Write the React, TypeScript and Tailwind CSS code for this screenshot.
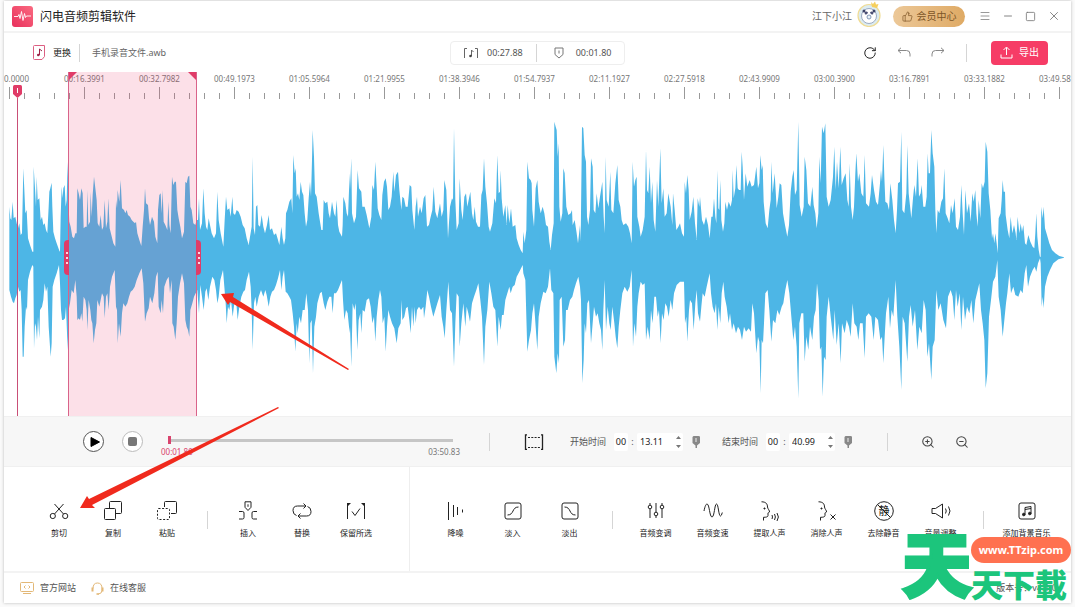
import React, { useState } from "react";
import { Menu, Minus, Square, X, RotateCw, ThumbsUp, ZoomIn, ZoomOut } from "lucide-react";

// Envelope outlines, stored in three blocks. Each block starts at its own offset, silence is y = 443.
const TOP = [
  "28,443 28,290 31,325 34,330 38,275 41,325 46,320 50,340 54,355 58,340 62,375 66,370 70,175 73,240 76,310 80,300 84,385 90,405 97,425 100,425 101,170 105,235 108,290 110,200 113,270 118,265 122,330 126,320 130,345 134,340 138,360 142,370 146,290 148,245 151,235 155,218 157,290 160,365 165,385 170,400 178,422 180,425 182,320 185,230 188,265 190,235 194,225 197,290 200,270 203,155 206,290 208,335 212,350 217,380 222,385 226,370 230,370 232,235 236,250 240,270 244,235 248,250 251,355 256,350 260,350 262,240 265,345 270,335 272,245 275,320 278,255 282,200 286,235 290,270 293,340 298,350 302,315 306,360 310,350 314,270 318,355 322,335 325,265 329,355 334,375 340,400 346,410 348,270 351,295 353,240 358,275 362,210 366,295 372,300 376,310 380,300 384,315 390,320 395,330 400,335 405,340 408,335 412,370 418,390 424,408 428,350 432,300 435,235 438,280 444,285 447,325 450,345 456,320 462,335 466,380 472,400 474,300 478,255 482,250 485,310 488,240 491,335 496,345 502,360 505,275 508,345 512,370 516,200 520,225 524,215 528,215 532,300 536,325 541,350 546,385 552,365 556,215 560,220 564,200 568,197 571,290 575,300 580,340 586,345 590,330 594,330 597,265 600,360 606,340 610,235 614,310 618,350 622,360 626,325 630,345 635,370 642,385 648,370 652,245 656,330 662,370 670,410 674,330 678,260 682,300 688,295 692,320 697,260 700,310 705,315 710,300 716,305 722,320 728,345 734,355 740,385 746,405 750,380 755,350 758,140 761,355 765,375 768,290 772,285 775,345 780,350 785,315 790,350 795,370 801,345 806,315 810,360 816,355 822,375 828,370 834,390 838,405 844,350 848,385 852,405 856,385 858,310 862,300 868,275 874,265 877,310 880,135 884,190 887,175 890,260 894,250 898,270 902,215 906,245 910,255 914,310 918,350 922,330 926,265 930,215 933,260 936,150 938,60 942,140 945,250 950,260 956,310 964,360 968,360 971,270 976,280 982,275 986,310 990,325 996,275 1002,310 1006,320 1010,270 1014,345 1018,365 1026,380 1028,345 1030,260 1036,280 1040,310 1044,320 1049,190",
  "0,240 4,145 6,310 12,340 18,320 23,180 27,235 34,245 37,290 44,290 50,315 58,355 64,320 67,225 72,240 76,155 80,230 83,295 88,315 94,330 97,255 102,215 107,205 111,230 115,300 120,290 125,260 130,185 133,245 138,195 144,185 148,240 154,300 157,260 162,265 167,290 173,290 179,225 184,230 187,300 193,360 197,290 201,260 204,320 210,290 215,310 221,265 226,255 231,350 237,345 241,325 247,300 251,230 256,305 262,325 270,280 275,320 280,300 283,210 289,240 294,385 300,290 306,265 309,270 312,55 316,270 320,360 326,340 329,205 334,300 338,330 343,260 348,250 352,290 357,265 361,245 366,310 370,330 374,290 378,335 384,350 390,350 394,255 398,240 402,145 406,230 411,280 416,350 420,365 427,340 433,265 438,280 442,135 446,250 450,245 452,180 455,265 460,320 466,285 470,345 473,285 478,340 483,295 488,350 496,345 500,385 506,405 512,420 518,430 520,365 524,400 529,360 532,155 537,205 542,210 545,220 547,300 552,350 557,235 562,210 566,275 572,310 578,290 583,310 588,345 594,350 598,395 602,420 606,375 611,340 613,35 617,50 620,60 623,140 626,100 628,290 632,335 637,310 640,175 644,190 649,290 655,315 662,310 666,300 668,345 674,330 680,370 684,400 690,345 692,395 696,50 700,55 704,135 708,155 711,320 715,345 720,300 723,145 728,170 731,300 736,310 740,250 745,295 750,260 757,215 761,320 764,370 767,140 770,270 776,290 781,185 784,300 790,310 796,220 802,165 806,270 811,290 815,330 820,345 828,340 835,350 840,370 845,400 848,155 852,230 856,210 860,200 862,320 868,350 872,380 878,360 884,320 888,120 891,240 895,250 899,170 903,280 907,215 911,330 916,365 921,210 925,290 931,115 935,280 940,235 944,320 950,310 955,250 962,290 967,345 969,250 974,300 979,360 985,350 990,340 996,370 1002,380 1004,215 1008,250 1012,195 1016,240 1019,330 1025,305 1030,260 1035,340 1040,390 1043,265 1048,290",
  "0,260 6,330 12,345 18,320 24,345 29,385 34,320 38,320 42,265 46,320 49,340 52,180 55,295 58,300 61,210 64,330 69,365 73,340 76,275 81,300 86,275 92,290 96,270 98,180 101,265 106,235 109,165 113,235 117,240 122,240 125,125 128,170 132,270 137,190 142,230 149,210 155,230 162,225 169,170 174,235 178,220 181,135 185,180 188,165 191,275 197,340 203,355 208,300 212,270 214,155 218,250 224,190 230,295 235,260 239,220 244,225 249,310 255,345 262,380 267,345 272,245 277,200 281,180 285,255 290,240 295,35 299,285 305,320 311,290 314,140 319,180 324,280 331,290 337,230 341,285 346,310 350,355 355,310 358,140 362,220 366,50 371,70 376,40 380,260 386,290 392,270 399,200 403,110 407,240 411,155 416,235 421,110 425,225 431,205 437,190 442,270 446,290 449,160 453,290 458,330 462,290 466,190 469,130 474,215 478,190 484,250 490,260 494,135 498,280 507,290 512,250 516,195 522,240 528,275 534,285 540,220 543,180 546,215 550,105 553,200 556,275 562,280 567,300 571,220 577,270 582,330 587,370 591,300 594,220 600,215 604,65 607,300 613,310 619,250 622,105 626,250 634,325 639,265 643,225 648,260 653,145 657,260 662,250 665,225 670,290 676,290 680,260 683,130 686,190 690,190 694,60 698,130 703,170 706,300 709,370 713,300 718,310 724,275 729,265 733,175 737,310 743,325 748,340 753,285 758,310 764,265 768,350 774,360 780,320 784,225 788,310 792,375 796,240 801,310 807,280 812,335 817,250 821,275 826,240 829,310 833,350 836,270 841,325 845,220 849,235 854,215 857,95 862,125 866,250 871,300 876,385 879,370 883,400 886,370 890,400 893,430 896,325 902,310 905,270 908,210 911,245 915,245 917,315 923,360 928,385 932,320 937,370 942,345 947,370 949,390 953,320 958,370 962,340 966,365 970,345 975,400 979,405 985,375 991,395 998,410 1003,415 1006,370 1009,310 1012,380 1016,420 1020,441 1022,440 1024,290 1028,325 1031,290 1035,355 1041,375 1048,400 1056,420 1066,430 1078,438 1092,442",
];

const BOTTOM = [
  "28,540 33,560 38,575 42,580 46,565 50,555 54,530 58,545 62,540 65,600 68,740 71,740 74,650 78,590 81,600 84,510 90,485 97,465 100,470 102,715 105,640 108,650 111,690 114,620 118,685 120,600 126,590 130,570 134,520 138,545 142,530 146,650 152,740 155,700 158,530 163,510 170,490 177,465 180,520 183,600 186,630 190,630 195,625 198,590 203,720 206,600 210,580 215,540 221,550 226,510 230,560 232,630 236,625 240,630 244,610 247,635 251,560 256,570 260,600 262,660 266,570 271,600 274,630 277,640 281,700 285,660 289,640 292,570 298,590 302,570 306,550 311,560 314,625 318,560 322,550 326,600 330,530 336,500 344,480 348,590 351,600 353,700 357,640 362,680 366,610 370,580 376,590 382,580 387,560 392,545 398,540 404,530 410,510 418,490 425,475 430,520 435,635 440,610 446,595 450,560 457,580 463,550 468,500 473,485 476,590 482,610 485,570 489,610 493,530 500,510 506,500 510,550 515,510 517,640 521,650 526,690 530,640 534,560 540,520 546,490 552,520 556,630 560,650 564,660 568,680 571,600 577,580 582,560 587,550 592,540 597,610 601,525 606,560 611,600 616,545 620,535 625,570 630,530 637,500 643,510 648,540 652,580 656,560 661,510 669,480 673,530 677,580 680,640 684,590 688,600 693,570 698,620 703,580 709,580 713,630 718,590 724,560 730,545 735,540 740,510 747,485 752,530 755,600 758,720 762,580 766,560 770,590 776,560 783,540 790,560 796,540 800,555 806,590 811,560 816,545 822,540 828,525 834,505 840,480 844,540 848,500 852,480 857,545 862,550 868,560 873,570 878,610 882,650 886,725 890,640 893,670 898,620 903,640 908,600 914,600 919,550 924,600 928,760 931,640 935,630 939,790 943,650 948,620 952,580 960,550 965,545 971,580 976,600 982,575 988,560 994,560 998,610 1002,550 1008,550 1014,540 1022,520 1026,510 1029,570 1033,630 1038,600 1043,610 1049,670",
  "0,650 4,770 8,580 13,600 17,580 22,720 26,630 31,610 34,670 38,600 44,605 50,570 57,565 62,590 67,640 72,620 76,695 80,620 85,570 90,540 94,560 98,640 103,620 107,725 111,650 115,600 120,620 126,640 133,655 140,700 145,655 152,640 155,570 157,630 163,620 168,595 173,590 178,630 182,670 186,590 190,650 194,590 197,640 201,600 207,590 213,600 220,590 222,625 227,590 232,540 237,560 243,590 250,620 256,600 262,580 270,555 275,620 280,650 284,685 289,600 295,515 300,600 306,610 312,770 316,640 320,550 326,560 329,710 334,640 340,580 346,650 350,590 355,610 360,635 366,580 372,560 379,540 385,520 391,570 396,620 402,765 406,650 412,600 418,515 424,550 430,590 436,600 442,710 446,620 452,660 456,615 461,615 466,570 472,550 478,530 482,550 488,530 494,525 500,500 508,485 518,465 520,490 526,510 529,620 532,725 537,690 543,660 547,610 552,580 557,650 562,720 566,620 572,580 580,545 587,550 594,530 600,475 604,540 610,550 613,740 619,790 623,730 627,760 629,570 635,560 640,710 645,690 648,600 653,600 660,570 667,560 672,540 678,520 685,500 690,530 693,570 697,820 701,750 704,640 708,670 712,580 717,570 723,700 728,640 732,590 738,620 743,610 748,640 753,660 757,720 760,600 764,510 768,660 773,590 778,640 782,660 787,590 793,640 797,680 802,715 806,650 811,600 817,550 824,530 832,545 839,530 845,480 849,710 853,640 858,680 862,590 866,550 872,515 878,525 884,520 888,690 893,650 899,690 903,600 908,640 913,560 918,560 923,620 927,600 932,700 936,610 941,630 946,580 951,590 956,620 962,570 967,600 972,550 980,525 990,515 1002,515 1005,640 1009,620 1012,695 1017,600 1020,570 1026,580 1031,660 1036,580 1040,540 1044,610",
  "0,635 4,590 8,550 14,560 20,530 29,490 33,550 38,590 44,610 48,580 52,660 56,590 61,640 65,550 70,515 74,560 80,590 86,640 90,610 96,660 101,640 108,670 114,650 120,660 126,690 132,650 138,665 146,655 153,665 157,580 162,610 169,730 174,680 178,695 182,850 185,690 189,700 192,640 196,550 203,540 208,600 214,695 219,630 226,640 232,600 238,615 245,590 250,580 256,540 262,510 268,550 274,620 280,690 285,650 290,710 295,865 298,640 304,610 310,610 314,755 319,680 325,720 330,650 337,690 342,620 347,600 351,520 356,570 360,720 364,710 368,860 372,740 377,750 380,620 386,560 392,620 400,690 404,600 410,705 416,640 422,760 426,640 434,670 440,630 447,650 452,680 458,580 463,640 470,650 475,690 480,640 488,640 494,745 498,620 506,610 514,620 521,690 526,620 534,630 541,690 546,680 550,760 554,680 558,610 565,560 570,655 575,600 580,620 587,510 592,620 598,710 604,840 608,620 614,640 622,755 627,620 632,585 638,650 645,600 652,720 658,650 665,670 671,570 677,600 682,740 687,700 694,810 698,710 704,690 709,540 715,600 722,580 730,630 738,655 744,560 752,540 758,560 763,630 768,540 773,590 779,550 784,660 789,560 795,630 801,590 808,610 814,570 820,640 826,570 832,545 838,520 843,600 848,640 853,690 857,835 862,790 867,620 873,570 879,515 886,500 892,450 896,560 902,600 908,680 914,620 918,580 922,550 928,490 933,550 940,530 946,555 955,560 962,540 968,550 974,490 979,465 984,530 990,500 998,480 1004,470 1009,485 1014,460 1020,445 1022,460 1025,590 1028,560 1031,595 1035,530 1042,500 1050,480 1060,460 1075,448 1092,443",
];

const OFFSETS = [0, 1050, 2100];

function toPoints(blocks: string[]): string[] {
  return blocks.flatMap((block, i) =>
    block.split(" ").map((pair) => {
      const [x, y] = pair.split(",").map(Number);
      return `${x + OFFSETS[i]},${y}`;
    })
  );
}

const WAVE = [...toPoints(TOP), ...toPoints(BOTTOM).reverse()].join(" ");

const MARKS = [
  "0.0000", "00:16.3991", "00:32.7982", "00:49.1973", "01:05.5964",
  "01:21.9955", "01:38.3946", "01:54.7937", "02:11.1927", "02:27.5918",
  "02:43.9909", "03:00.3900", "03:16.7891", "03:33.1882", "03:49.5873",
];

function Icon({ children, className = "size-5" }: { children: React.ReactNode; className?: string }) {
  return (
    <svg viewBox="0 0 20 20" className={`shrink-0 ${className}`} fill="none" stroke="currentColor" strokeWidth="1" aria-hidden="true">
      {children}
    </svg>
  );
}

const icons = {
  cut: (
    <Icon>
      <circle cx="3.8" cy="15" r="2.6" />
      <circle cx="16.2" cy="15" r="2.6" />
      <path d="M5.5 3 14.5 13M14.5 3 5.5 13" />
    </Icon>
  ),
  copy: (
    <Icon>
      <rect x="1.5" y="7.5" width="11" height="11" rx="1" />
      <path d="M6.500 7.500V1.500Q6.500 .5 7.500 .5H17.500Q18.500 .5 18.500 1.500V11.500Q18.500 12.500 17.500 12.500H12.500" />
    </Icon>
  ),
  paste: (
    <Icon>
      <rect x=".5" y="7.500" width="12" height="11" rx="1" strokeDasharray="2 1.600" />
      <path d="M7.500 6V1.500Q7.500 .5 8.500 .5H18.500Q19.500 .5 19.500 1.500V11.500Q19.500 12.500 18.500 12.500H14" />
    </Icon>
  ),
  insert: (
    <Icon>
      <path d="M7 .8h6v5.500L10 9.500 7 6.300zM10 3.300v2.500M1 10.500h3.500q1.500 0 1.500 1.500v4.500q0 1.500-1.500 1.500H1M19 10.500h-3.500q-1.500 0-1.500 1.500v4.500q0 1.500 1.500 1.500H19" />
    </Icon>
  ),
  replace: (
    <Icon>
      <path d="M4.500 14.500Q1 13.500 1 9.500 1 5 5.500 5H14M11.500 2.500 14 5l-2.500 2.500M15.500 5.500Q19 6.500 19 10.500 19 15 14.500 15H6M8.500 12.500 6 15l2.500 2.500" />
    </Icon>
  ),
  keep: (
    <Icon>
      <path d="M4 2.500H1.500V18M16 2.500h2.500V18" />
      <path d="M1 2h4L1 6zM19 2h-4l4 4z" fill="currentColor" stroke="none" />
      <path d="m6 10.500 3 4 5-7" />
    </Icon>
  ),
  denoise: (
    <Icon>
      <path d="M2.500 1v18M7.500 4v12M11.500 6v8M16.500 8.500v3" />
    </Icon>
  ),
  fadeIn: (
    <Icon>
      <rect x="2" y="2" width="16" height="16" rx="2" />
      <path d="M4.500 14c7 0 4-8 11-8" />
    </Icon>
  ),
  fadeOut: (
    <Icon>
      <rect x="2" y="2" width="16" height="16" rx="2" />
      <path d="M4.500 6c7 0 4 8 11 8" />
    </Icon>
  ),
  pitch: (
    <Icon>
      <path d="M4 2v2M4 8v9M10 2v9M10 15v2M16 2v2M16 8v9" />
      <circle cx="4" cy="6" r="1.800" />
      <circle cx="10" cy="13" r="1.800" />
      <circle cx="16" cy="6" r="1.800" />
    </Icon>
  ),
  speed: (
    <Icon>
      <path d="M1 10C2 5 3 3 4 3c2.500 0 2.500 13 5 13S11.500 3 13.500 3s2 12 4 12q1 0 1.800-3.500" />
    </Icon>
  ),
  extract: (
    <Icon>
      <path d="M1.500 .8C6 .8 7.500 3 7.500 6c0 1.500 2.500 4 2 5-.3.600-1.500.5-1.500 1v2.500c0 1.500-2 1.800-4.500 1.800V19.500M12 14q1 2 0 4M14.500 13q1.800 3 0 6M17 12q2.800 4 0 8" />
      <circle cx="4.500" cy="7.500" r=".6" fill="currentColor" />
    </Icon>
  ),
  remove: (
    <Icon>
      <path d="M1.500 .8C6 .8 7.500 3 7.500 6c0 1.500 2.500 4 2 5-.3.600-1.500.5-1.500 1v2.500c0 1.500-2 1.800-4.500 1.800V19.500M13.500 13.500l5 5M18.500 13.500l-5 5" />
      <circle cx="4.500" cy="7.500" r=".6" fill="currentColor" />
    </Icon>
  ),
  silence: (
    <Icon>
      <circle cx="10" cy="10" r="9.300" />
      <text x="10" y="14" textAnchor="middle" fontSize="11" fill="currentColor" stroke="none">静</text>
      <path d="m3.500 3.500 13 13" />
    </Icon>
  ),
  volume: (
    <Icon>
      <path d="M1 7.500h3.500L11.500 3v14l-7-4.500H1zM14.500 7.500q1.500 2.500 0 5M17.500 5.500q3 4.500 0 9" />
    </Icon>
  ),
  music: (
    <Icon>
      <rect x="2" y="2" width="16" height="16" rx="2" />
      <path d="M8 13.500V6.500L14 5.500V12.500M8 8.500l6-1" />
      <circle cx="6.800" cy="13.500" r="1.300" fill="currentColor" />
      <circle cx="12.800" cy="12.500" r="1.300" fill="currentColor" />
    </Icon>
  ),
};

function Tool({ icon, label, width = "w-[57px]" }: { icon: keyof typeof icons; label: string; width?: string }) {
  return (
    <button className={`${width} shrink-0 flex flex-col items-center gap-1.5 text-[#222] cursor-pointer`}>
      {icons[icon]}
      <span className="text-[8px] leading-3 whitespace-nowrap">{label}</span>
    </button>
  );
}

function Divider({ className = "" }: { className?: string }) {
  return <div className={`w-px h-[18px] shrink-0 bg-[#d5d5d5] ${className}`} />;
}

function TitleBar() {
  return (
    <header className="h-8 shrink-0 flex items-center pl-2 pr-2.5 border-b-2 border-[#f3f3f3]">
      <svg viewBox="0 0 21 21" className="size-[21px] shrink-0" aria-hidden="true">
        <defs>
          <linearGradient id="logo" x1="1" y1="0" x2="0" y2="1">
            <stop offset="0" stopColor="#fa6a80" />
            <stop offset="1" stopColor="#e8305c" />
          </linearGradient>
        </defs>
        <rect width="21" height="21" rx="3" fill="url(#logo)" />
        <path d="M2 10.500h4l1-2 1 4 1.500-7 1.500 9 1.500-7 1 4 1-1.500h4.500" fill="none" stroke="#fff" strokeWidth=".9" />
      </svg>
      <h1 className="ml-[7px] pt-0.5 text-xs text-[#222]">闪电音频剪辑软件</h1>
      <div className="ml-auto flex items-center text-[10px]">
        <span className="text-[#666]">江下小江</span>
        <svg viewBox="0 0 24 26" className="ml-[5px] mb-1 w-6 h-[26px]" aria-hidden="true">
          <circle cx="12" cy="14.500" r="11" fill="#dcebf0" stroke="#f0dc94" strokeWidth="1.200" />
          <circle cx="12" cy="15" r="7.500" fill="#fff" stroke="#8797b5" strokeWidth=".8" />
          <circle cx="7" cy="10" r="1.500" fill="#3d4468" />
          <circle cx="17" cy="10" r="1.500" fill="#3d4468" />
          <path d="M7.500 11.500q2-2 3.500 0l-1 1.800-2 .2zM16.500 11.500q-2-2-3.500 0l1 1.800 2 .2z" fill="#4b5075" />
          <circle cx="12" cy="16" r="2" fill="#e9f2f8" stroke="#6b84a8" strokeWidth=".8" />
          <path d="m14 1 2 2 2-2.500 1 3 2.500-.5-1.500 4-5-1z" fill="#f6cf5c" />
        </svg>
        <button className="ml-3 h-[21px] w-[72px] rounded-full flex items-center justify-center gap-1 bg-linear-to-r from-[#ecc898] to-[#dfaa64] text-[#7d5526] cursor-pointer">
          <ThumbsUp className="size-[11px]" strokeWidth={1.5} />
          会员中心
        </button>
        <div className="ml-3.5 flex items-center gap-[11px] text-[#777]">
          <button aria-label="菜单"><Menu className="size-3" strokeWidth={1.5} /></button>
          <button aria-label="最小化"><Minus className="size-3" strokeWidth={1.8} /></button>
          <button aria-label="最大化"><Square className="size-[11px]" strokeWidth={1.8} /></button>
          <button aria-label="关闭"><X className="size-3.5" strokeWidth={1.5} /></button>
        </div>
      </div>
    </header>
  );
}

function Toolbar() {
  return (
    <div className="h-[39px] shrink-0 grid grid-cols-[1fr_auto_1fr] items-center text-[9px] text-[#666]">
      <div className="flex items-center pl-[29px]">
        <button className="flex items-center gap-[7px] text-[#222]">
          <svg viewBox="0 0 13 15" className="w-[13px] h-[15px]" fill="none" stroke="#dc5f82" aria-hidden="true">
            <path d="M1.500 .5h10v11l-2.500 3H1.500Q.5 14.500 .5 13.500v-12Q.5 .5 1.500 .5z" />
            <path d="M6.500 10V4l2.500 2" stroke="#9c2448" />
            <circle cx="5.300" cy="10" r="1.300" fill="#9c2448" stroke="none" />
          </svg>
          更换
        </button>
        <Divider className="ml-2 mr-3" />
        <span>手机录音文件.awb</span>
      </div>
      <div className="flex items-center h-6 w-[175px] rounded-sm border border-[#eee] text-[#555]">
        <svg viewBox="0 0 16 12" className="ml-3 w-4 h-3" fill="none" stroke="#666" aria-hidden="true">
          <path d="M4 1.500H1.500V11M12 1.500h2.500V11M8.500 9V3l2 2" />
          <circle cx="7.500" cy="9" r="1.300" fill="#444" stroke="none" />
        </svg>
        <span className="ml-2">00:27.88</span>
        <Divider className="ml-[13px] mr-[17px]" />
        <svg viewBox="0 0 10 12" className="w-2.5 h-3" fill="none" stroke="#777" aria-hidden="true">
          <path d="M1 1h8v6.500L5 11 1 7.500zM5 3.500v3" />
        </svg>
        <span className="ml-3">00:01.80</span>
      </div>
      <div className="flex items-center justify-end pr-[23px] text-[#888]">
        <button aria-label="重置" className="text-[#222]"><RotateCw className="size-3.5" strokeWidth={1.7} /></button>
        <button aria-label="撤销" className="ml-5">
          <svg viewBox="0 0 14 12" className="w-3.5 h-3" fill="none" stroke="currentColor"><path d="M4 .8 1 3.500l3 2.700M1 3.500h8.500q3.500 0 3.500 3.500v2.500" /></svg>
        </button>
        <button aria-label="重做" className="ml-5">
          <svg viewBox="0 0 14 12" className="w-3.5 h-3" fill="none" stroke="currentColor"><path d="m10 .8 3 2.700-3 2.700M13 3.500H4.500Q1 3.500 1 7v2.500" /></svg>
        </button>
        <Divider className="ml-[21px] mr-6 h-4" />
        <button className="h-6 w-[57px] rounded-sm flex items-center justify-center gap-1.5 bg-[#f63c66] text-white text-[10px] cursor-pointer">
          <svg viewBox="0 0 13 13" className="size-[13px]" fill="none" stroke="currentColor" aria-hidden="true">
            <path d="M6.500 9V1.500M3.500 4l3-3 3 3M1 8.500v3.500h11V8.500" />
          </svg>
          导出
        </button>
      </div>
    </div>
  );
}

function Grip({ className }: { className: string }) {
  return (
    <div className={`absolute top-[168px] h-[35px] w-[5px] bg-[#e03c68] flex flex-col items-center justify-center gap-[3px] ${className}`}>
      <i className="size-0.5 bg-white/80" />
      <i className="size-0.5 bg-white/80" />
      <i className="size-0.5 bg-white/80" />
    </div>
  );
}

function Timeline() {
  return (
    <section className="relative flex-1 min-h-[344px] flex flex-col overflow-hidden">
      <div className="h-7 shrink-0 flex overflow-hidden">
        <div className="flex -ml-8">
          {MARKS.map((mark, i) => (
            <div key={mark} className="w-[75px] shrink-0">
              <div className={`h-[15px] text-[8px] leading-[13px] text-[#777] ${i === 0 ? "pl-8" : "text-center"}`}>{mark}</div>
              <svg viewBox="0 0 75 13" className="w-[75px] h-[13px]" fill="#999" aria-hidden="true">
                <rect x="7" y="6" width="1" height="6" />
                <rect x="22" y="6" width="1" height="6" />
                <rect x="37" y="0" width="1" height="12" />
                <rect x="52" y="6" width="1" height="6" />
                <rect x="67" y="6" width="1" height="6" />
              </svg>
            </div>
          ))}
        </div>
      </div>
      <div className="flex-1 flex">
        <svg viewBox="12 -30 3201 948" preserveAspectRatio="none" className="w-full h-[316px]" aria-hidden="true">
          <polygon points={WAVE} fill="#4db6e6" />
        </svg>
      </div>

      {/* selected range */}
      <div className="absolute inset-y-0 left-[6%] w-[129px] bg-[#ec4171]/16 border-x border-[#d9638a]">
        <i className="absolute left-0 top-0 size-2 bg-[#e03c68] [clip-path:polygon(0_0,100%_0,0_100%)]" />
        <i className="absolute right-0 top-0 size-2 bg-[#e03c68] [clip-path:polygon(0_0,100%_0,100%_100%)]" />
        <Grip className="-left-[5px] rounded-l-sm" />
        <Grip className="-right-[5px] rounded-r-sm" />
      </div>

      {/* playhead */}
      <div className="absolute left-[9px] top-[13px] bottom-0 w-[9px] flex flex-col items-center">
        <svg viewBox="0 0 9 13" className="w-[9px] h-[13px] shrink-0" aria-hidden="true">
          <path d="M1.500 0h6Q9 0 9 1.500V9l-4.500 4L0 9V1.500Q0 0 1.500 0z" fill="#e03c68" />
          <path d="M4.500 3v5" stroke="#fff" />
        </svg>
        <div className="w-px flex-1 bg-[#c94f77]" />
      </div>
    </section>
  );
}

function TimeField({ label, minutes, seconds }: { label: string; minutes: string; seconds: string }) {
  const [min, setMin] = useState(minutes);
  const [sec, setSec] = useState(seconds);
  return (
    <div className="flex items-center shrink-0 text-[9px]">
      <span className="text-[#555] whitespace-nowrap">{label}</span>
      <input
        aria-label={`${label} 分`}
        value={min}
        onChange={(e) => setMin(e.target.value)}
        className="ml-2 w-3.5 h-[18px] rounded-xs bg-white text-center text-[#222] outline-none"
      />
      <span className="w-[9px] text-center text-[#555]">:</span>
      <div className="flex items-center h-[18px] w-[46px] rounded-xs bg-white">
        <input
          aria-label={`${label} 秒`}
          value={sec}
          onChange={(e) => setSec(e.target.value)}
          className="w-[39px] h-full pl-[3px] bg-transparent text-[#222] outline-none"
        />
        <svg viewBox="0 0 5 12" className="mr-0.5 w-[5px] h-3" fill="#777" aria-hidden="true">
          <path d="M0 3 2.500 0 5 3zM0 9l2.500 3L5 9z" />
        </svg>
      </div>
      <button aria-label={`${label} 标记`} className="ml-[9px]">
        <svg viewBox="0 0 8 12" className="w-2 h-3" aria-hidden="true">
          <path d="M1.500 0h5Q8 0 8 1v6L5 9.500V12H3.500V9.500L.5 7V1z" fill="#888" />
          <path d="M4 2v4" stroke="#eee" />
        </svg>
      </button>
    </div>
  );
}

function PlayerBar() {
  return (
    <section className="h-[51px] shrink-0 flex items-center pl-[79px] pr-[102px] bg-[#f7f7f7] border-y border-[#f0f0f0]">
      <button aria-label="播放" className="size-[21px] shrink-0 rounded-full border border-[#555] bg-white flex items-center justify-center">
        <svg viewBox="0 0 10 10" className="size-2.5 ml-0.5" aria-hidden="true"><path d="M1 .5 9.500 5 1 9.500z" fill="#000" stroke="#000" strokeLinejoin="round" /></svg>
      </button>
      <button aria-label="停止" className="ml-[18px] size-[21px] shrink-0 rounded-full border border-[#bbb] bg-white flex items-center justify-center">
        <span className="size-[9px] rounded-xs bg-[#777]" />
      </button>
      <div className="ml-[18px] flex-1 flex flex-col pt-2.5 text-[8px]">
        <input
          type="range"
          aria-label="播放进度"
          min={0}
          max={231}
          defaultValue={0}
          className="mx-[7px] h-2 appearance-none bg-transparent [&::-webkit-slider-runnable-track]:h-[3px] [&::-webkit-slider-runnable-track]:bg-[#c6c6c6] [&::-webkit-slider-thumb]:appearance-none [&::-webkit-slider-thumb]:w-[3px] [&::-webkit-slider-thumb]:h-2 [&::-webkit-slider-thumb]:-mt-[3px] [&::-webkit-slider-thumb]:bg-[#d9436d]"
        />
        <div className="mt-0.5 flex justify-between leading-[11px]">
          <span className="text-[#d9436d]">00:01.80</span>
          <span className="text-[#777]">03:50.83</span>
        </div>
      </div>
      <Divider className="ml-[29px]" />
      <button aria-label="选区" className="ml-[34px] shrink-0">
        <svg viewBox="0 0 20 16" className="w-5 h-4" fill="none" stroke="#222" aria-hidden="true">
          <path d="M3 .8H1.500v14.500H3M17 .8h1.500v14.500H17" strokeWidth="1.300" />
          <path d="M4 3.500h12M4 13.500h12" strokeDasharray="2 1.300" />
        </svg>
      </button>
      <div className="ml-[26px] flex gap-[22px]">
        <TimeField label="开始时间" minutes="00" seconds="13.11" />
        <TimeField label="结束时间" minutes="00" seconds="40.99" />
      </div>
      <Divider className="ml-[35px]" />
      <button aria-label="放大" className="ml-[33px] text-[#444]"><ZoomIn className="size-3.5" strokeWidth={1.8} /></button>
      <button aria-label="缩小" className="ml-5 text-[#444]"><ZoomOut className="size-3.5" strokeWidth={1.8} /></button>
    </section>
  );
}

function Tools() {
  return (
    <section className="h-[104px] shrink-0 flex items-center">
      <div className="flex items-center pl-7 pr-[26px] pt-0.5">
        <Tool icon="cut" label="剪切" width="w-[54px]" />
        <Tool icon="copy" label="复制" width="w-[54px]" />
        <Tool icon="paste" label="粘贴" width="w-[54px]" />
        <Divider className="mx-[13px]" />
        <Tool icon="insert" label="插入" width="w-[54px]" />
        <Tool icon="replace" label="替换" width="w-[54px]" />
        <Tool icon="keep" label="保留所选" width="w-[54px]" />
      </div>
      <div className="w-px self-stretch bg-[#eee]" />
      <div className="flex items-center pl-[17px] pt-0.5">
        <Tool icon="denoise" label="降噪" />
        <Tool icon="fadeIn" label="淡入" />
        <Tool icon="fadeOut" label="淡出" />
        <Divider className="mx-3.5" />
        <Tool icon="pitch" label="音频变调" />
        <Tool icon="speed" label="音频变速" />
        <Tool icon="extract" label="提取人声" />
        <Tool icon="remove" label="消除人声" />
        <Tool icon="silence" label="去除静音" />
        <Tool icon="volume" label="音量调整" />
        <Divider className="mx-3.5" />
        <Tool icon="music" label="添加背景音乐" />
      </div>
    </section>
  );
}

function Footer() {
  return (
    <footer className="h-8 shrink-0 flex items-center pl-4 pr-3.5 border-t-2 border-[#f3f3f3] text-[9px] text-[#555]">
      <a href="#site" className="flex items-center gap-1.5">
        <svg viewBox="0 0 14 12" className="w-3.5 h-3" fill="none" stroke="#e3b877" aria-hidden="true">
          <rect x=".5" y=".5" width="13" height="9" rx="1" />
          <path d="M3 11.500h8M5.500 3.500 4 5l1.500 1.500M8.500 3.500 10 5 8.500 6.500" />
        </svg>
        官方网站
      </a>
      <a href="#support" className="ml-[15px] flex items-center gap-1.5">
        <svg viewBox="0 0 13 13" className="size-[13px]" fill="none" stroke="#e3b877" aria-hidden="true">
          <path d="M2 6.500Q2 1 6.500 1T11 6.500v2Q11 11.500 7.500 12" />
          <path d="M1.500 5.500v4M11.500 5.500v4" strokeWidth="2" />
          <path d="M5.500 12h2.500" strokeWidth="1.600" />
        </svg>
        在线客服
      </a>
      <span className="ml-auto">版本号：v4.1.0</span>
    </footer>
  );
}

function Watermark() {
  return (
    <div className="absolute right-0 bottom-0 w-[169px] h-[74px] font-black text-[#1cc57c] pointer-events-none">
      <span className="absolute left-0 bottom-0 text-[70px] leading-[76px] [-webkit-text-stroke:3px_#1cc57c]">天</span>
      <span className="absolute right-1 bottom-0 text-[32px] leading-9 whitespace-nowrap">天下載</span>
      <span className="absolute right-0 top-2 h-[26px] w-[100px] rounded-full bg-[#ff7150] text-white text-[11px] font-bold flex items-center justify-center">
        www.TTzip.com
      </span>
    </div>
  );
}

export default function App() {
  return (
    <div className="min-h-screen flex bg-[#fafafa] px-1 pt-px pb-1 font-['Noto_Sans','Noto_Sans_CJK_SC',sans-serif]">
      <main className="relative flex-1 min-w-0 flex flex-col bg-white shadow-[0_0_3px_#bbb]">
        <TitleBar />
        <Toolbar />
        <Timeline />
        <PlayerBar />
        <Tools />
        <Footer />

        {/* pointers */}
        <svg className="absolute inset-0 size-full pointer-events-none" fill="#f02a1d" aria-hidden="true">
          <path d="M217 293 230 292 229 296 345 368 344 369 226 301 224 304z" />
          <path d="M76 507 83 495 85 498 274 406 275 407 88 504 91 507z" />
        </svg>
        <Watermark />
      </main>
    </div>
  );
}
